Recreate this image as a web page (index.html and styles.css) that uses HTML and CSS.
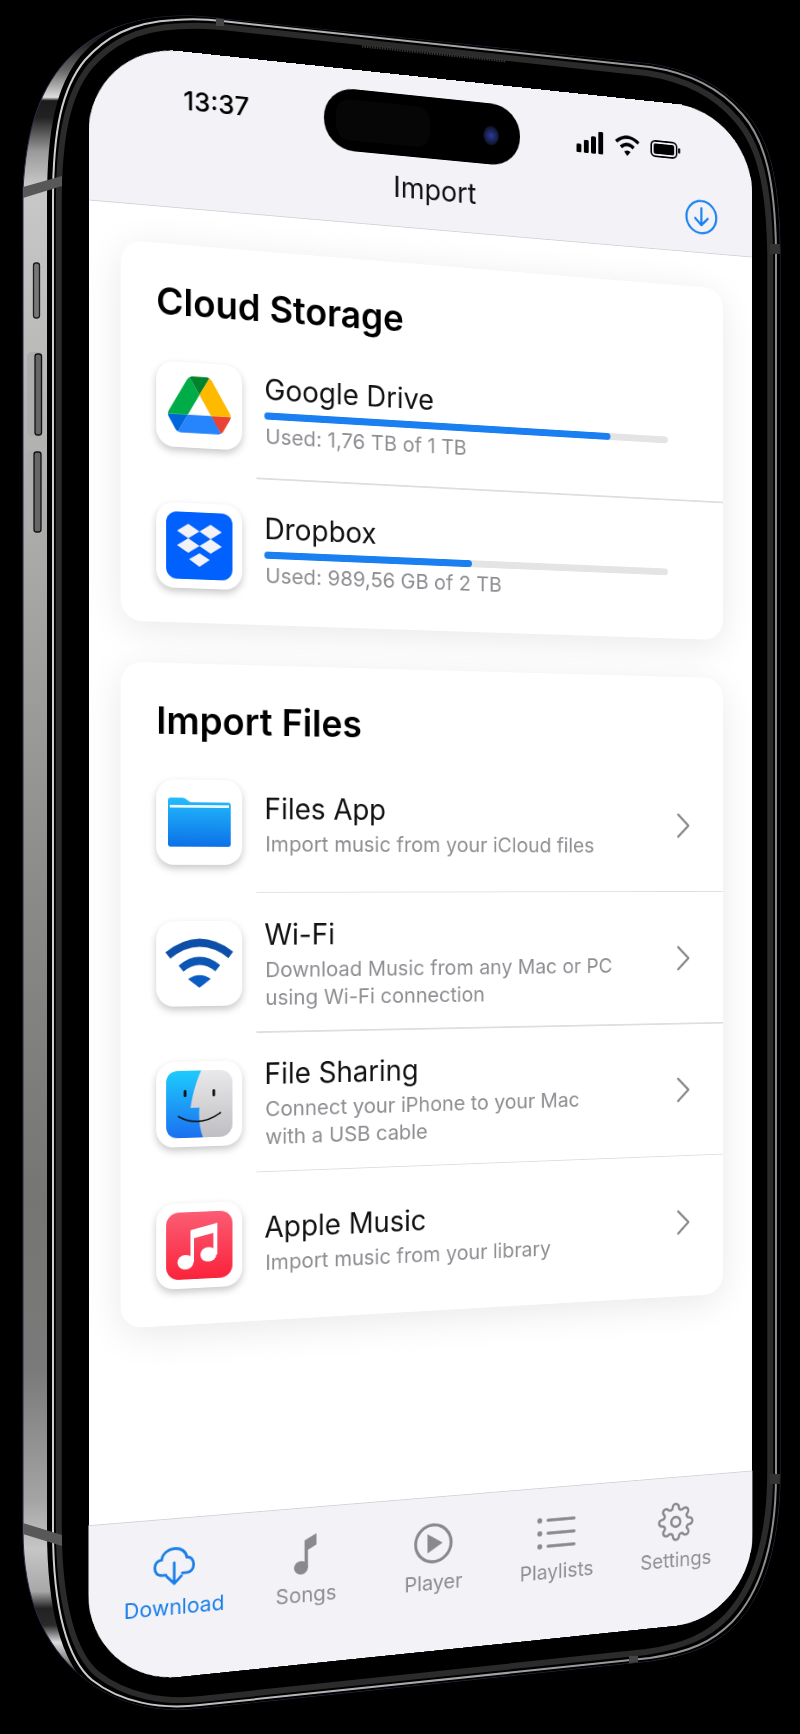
FILE: index.html
```html
<!DOCTYPE html>
<html lang="en">
<head>
  <meta charset="UTF-8" />
  <meta name="viewport" content="width=device-width, initial-scale=1.0"/>
  <title>Import</title>
  <link rel="stylesheet" href="styles.css">
</head>
<body>
  <div class="stage">
    <!-- phone body, drawn in page coordinates -->
    <svg class="body" viewBox="0 0 800 1734" width="800" height="1734">
      <defs>
        <linearGradient id="steel" gradientUnits="userSpaceOnUse" x1="0" y1="16" x2="0" y2="1710">
          <stop offset="0" stop-color="#111"/>
          <stop offset="0.016" stop-color="#222"/>
          <stop offset="0.032" stop-color="#666"/>
          <stop offset="0.048" stop-color="#ddd"/>
          <stop offset="0.05" stop-color="#1c1c1c"/>
          <stop offset="0.06" stop-color="#222"/>
          <stop offset="0.08" stop-color="#9a9a9a"/>
          <stop offset="0.1" stop-color="#c8c8c8"/>
          <stop offset="0.34" stop-color="#a6a6a4"/>
          <stop offset="0.52" stop-color="#8a8a88"/>
          <stop offset="0.7" stop-color="#757573"/>
          <stop offset="0.8" stop-color="#7a7a7a"/>
          <stop offset="0.876" stop-color="#a4a4a4"/>
          <stop offset="0.905" stop-color="#c6c6c6"/>
          <stop offset="0.93" stop-color="#a8a8a8"/>
          <stop offset="0.94" stop-color="#222"/>
          <stop offset="0.95" stop-color="#2a2a2a"/>
          <stop offset="0.96" stop-color="#ddd"/>
          <stop offset="0.98" stop-color="#333"/>
          <stop offset="1" stop-color="#111"/>
        </linearGradient>
        <linearGradient id="edge" gradientUnits="userSpaceOnUse" x1="50" y1="0" x2="780" y2="0">
          <stop offset="0" stop-color="#cfcfcf"/>
          <stop offset="0.5" stop-color="#a8a8a8"/>
          <stop offset="1" stop-color="#8c8c8c"/>
        </linearGradient>
        <path id="outer" d="M23 190 C26 130 40 85 72 55 C100 28 140 16 185 16 C195 16 210 17 222 19 L650 64 C690 70 720 85 745 112 C770 140 779 180 780 250 L780 1475 C780 1540 765 1595 735 1625 C715 1645 690 1655 650 1661 L200 1708 C150 1714 110 1700 80 1675 C45 1645 23 1600 23 1530 Z"/>
        <path id="rail" d="M53 200 C53 130 62 88 85 60 C105 38 130 22 175 20 C190 19 205 19 222 21 L650 67 C690 73 720 88 742 114 C765 140 775 180 776 250 L776 1475 C776 1540 762 1590 732 1622 C712 1642 690 1652 650 1658 L200 1705 C160 1710 120 1702 92 1680 C68 1660 53 1610 53 1530 Z"/>
        <clipPath id="outerClip"><use href="#outer"/></clipPath>
      </defs>
      <use href="#outer" fill="url(#steel)" stroke="#2b2c48" stroke-width="1"/>
      <g clip-path="url(#outerClip)">
        <use href="#rail" fill="#000" stroke="#000" stroke-width="12"/>
        <use href="#rail" fill="none" stroke="url(#edge)" stroke-width="2"/>
        <use href="#rail" fill="none" stroke="#2b2b2b" stroke-width="6" transform="translate(414.5 864) scale(0.984 0.9925) translate(-414.5 -864)"/>
        <!-- antenna bands -->
        <path d="M23 187 L62 176 L62 186 L23 198 Z" fill="#585858"/>
        <path d="M23 1523 L62 1535 L62 1546 L23 1534 Z" fill="#585858"/>
        <path d="M216 16 H224 V26 H216 Z" fill="#444"/>
        <path d="M629 1656 H638 V1668 H629 Z" fill="#444"/>
        <path d="M770 244 H782 V254 H770 Z" fill="#333"/>
        <path d="M770 1474 H782 V1484 H770 Z" fill="#333"/>
        <!-- speaker slit -->
        <path d="M362 46 L506 61" fill="none" stroke="#333" stroke-width="3" stroke-dasharray="1.5 1"/>
      </g>
      <!-- side buttons -->
      <rect x="33.500" y="263" width="6" height="55" rx="2.500" fill="#777" stroke="#1c1c1c" stroke-width="1.300"/>
      <rect x="27" y="352" width="16" height="85" rx="5" fill="#aeaeae"/>
      <rect x="35" y="354" width="6.500" height="81" rx="2.500" fill="#666" stroke="#111" stroke-width="1.300"/>
      <rect x="27" y="450" width="16" height="84" rx="5" fill="#aeaeae"/>
      <rect x="34" y="452" width="7" height="80" rx="2.500" fill="#666" stroke="#111" stroke-width="1.300"/>
    </svg>

    <main class="screen">
      <header class="top">
        <div class="status">
          <span class="time">13:37</span>
          <div class="island"><span class="sensor"></span><span class="lens"></span></div>
          <div class="status-icons">
            <svg class="signal" viewBox="0 0 34 26" width="34" height="26"><rect x="0" y="16" width="6" height="10" rx="1.5"/><rect x="9" y="11" width="6" height="15" rx="1.5"/><rect x="18" y="6" width="6" height="20" rx="1.5"/><rect x="27" y="0" width="6" height="26" rx="1.5"/></svg>
            <svg class="wifi" viewBox="0 0 32 26" width="32" height="26"><path d="M2 9 Q16 -3 30 9" fill="none" stroke="#000" stroke-width="4"/><path d="M8 15 Q16 8 24 15" fill="none" stroke="#000" stroke-width="4"/><path d="M12 20 Q16 17 20 20 L16 25 Z"/></svg>
            <svg class="battery" viewBox="0 0 38 20" width="38" height="20"><rect x="1" y="1" width="32" height="18" rx="5" fill="none" stroke="#000" stroke-width="2"/><rect x="4" y="4" width="26" height="12" rx="2.5"/><rect x="35" y="7" width="2.5" height="6" rx="1"/></svg>
          </div>
        </div>
        <div class="nav">
          <span></span>
          <h1>Import</h1>
          <svg class="nav-btn" viewBox="0 0 41 41" width="41" height="41"><circle cx="20.5" cy="20.5" r="19" fill="none" stroke="#1a82f0" stroke-width="2.6"/><path d="M20.5 10 V30 M12.5 22 L20.5 30 L28.5 22" fill="none" stroke="#1a82f0" stroke-width="2.6" stroke-linecap="round" stroke-linejoin="round"/></svg>
        </div>
      </header>

      <div class="content">
        <section class="card">
          <h2>Cloud Storage</h2>
          <div class="row">
            <div class="tile">
              <svg viewBox="0 0 87.3 78" width="70" height="63"><path d="m6.6 66.85 3.85 6.65c.8 1.4 1.95 2.5 3.3 3.3l13.75-23.8h-27.5c0 1.55.4 3.1 1.2 4.5z" fill="#0066da"/><path d="m43.65 25-13.75-23.8c-1.35.8-2.5 1.9-3.3 3.3l-25.4 44a9.06 9.06 0 0 0 -1.2 4.5h27.5z" fill="#00ac47"/><path d="m73.55 76.8c1.35-.8 2.5-1.9 3.3-3.3l1.6-2.75 7.65-13.25c.8-1.4 1.2-2.95 1.2-4.5h-27.502l5.852 11.5z" fill="#ea4335"/><path d="m43.65 25 13.75-23.8c-1.35-.8-2.9-1.2-4.5-1.2h-18.5c-1.6 0-3.15.45-4.5 1.2z" fill="#00832d"/><path d="m59.8 53h-32.3l-13.75 23.8c1.35.8 2.9 1.2 4.5 1.2h50.8c1.6 0 3.15-.45 4.5-1.2z" fill="#2684fc"/><path d="m73.4 26.5-12.7-22c-.8-1.4-1.95-2.5-3.3-3.3l-13.75 23.8 16.15 28h27.45c0-1.55-.4-3.1-1.2-4.5z" fill="#ffba00"/></svg>
            </div>
            <div class="storage">
              <div class="name">Google Drive</div>
              <div class="bar"><div class="fill fill-drive"></div></div>
              <div class="sub">Used: 1,76 TB of 1 TB</div>
            </div>
          </div>
          <hr />
          <div class="row">
            <div class="tile">
              <svg viewBox="0 0 74 74" width="74" height="74"><rect width="74" height="74" rx="12" fill="#0061fe"/><path d="M24.500 13 L37 21 L24.500 29 L12 21 Z M49.500 13 L62 21 L49.500 29 L37 21 Z M24.500 29 L37 37 L24.500 45 L12 37 Z M49.500 29 L62 37 L49.500 45 L37 37 Z M37 45 L48.500 52 L37 60 L25.500 52 Z" fill="#f2f2f7"/></svg>
            </div>
            <div class="storage">
              <div class="name">Dropbox</div>
              <div class="bar"><div class="fill fill-dropbox"></div></div>
              <div class="sub">Used: 989,56 GB of 2 TB</div>
            </div>
          </div>
        </section>

        <section class="card card-files">
          <h2>Import Files</h2>
          <div class="row">
            <div class="tile">
              <svg viewBox="0 0 70 54" width="70" height="54"><defs><linearGradient id="folder" x1="0" y1="0" x2="0" y2="1"><stop offset="0" stop-color="#22bcfb"/><stop offset="1" stop-color="#0c70e8"/></linearGradient></defs><path d="M0 3 Q0 0 3 0 H16 Q19 0 22 3 L25 5 H67 Q70 5 70 8 V51 Q70 54 67 54 H3 Q0 54 0 51 Z" fill="url(#folder)"/><rect x="2" y="8" width="66" height="3" fill="#e8f6ff"/></svg>
            </div>
            <div class="info">
              <div class="name">Files App</div>
              <div class="sub">Import music from your iCloud files</div>
            </div>
            <svg class="chev" viewBox="0 0 19 30" width="19" height="30"><path d="M3 2 L16 15 L3 28" fill="none" stroke="#8a8a8e" stroke-width="2.6" stroke-linecap="round" stroke-linejoin="round"/></svg>
          </div>
          <hr />
          <div class="row">
            <div class="tile">
              <svg viewBox="0 0 78 56" width="76" height="55"><path d="M3 19 Q39 -9 75 19" fill="none" stroke="#0d4fa8" stroke-width="9"/><path d="M18 34 Q39 17 60 34" fill="none" stroke="#0b55b4" stroke-width="9"/><path d="M26 46 Q39 37 52 46 L39 56 Z" fill="#0a5cc4"/></svg>
            </div>
            <div class="info">
              <div class="name">Wi-Fi</div>
              <div class="sub">Download Music from any Mac or PC<br />using Wi-Fi connection</div>
            </div>
            <svg class="chev" viewBox="0 0 19 30" width="19" height="30"><path d="M3 2 L16 15 L3 28" fill="none" stroke="#8a8a8e" stroke-width="2.6" stroke-linecap="round" stroke-linejoin="round"/></svg>
          </div>
          <hr />
          <div class="row">
            <div class="tile">
              <svg viewBox="0 0 74 74" width="74" height="74"><defs><linearGradient id="fBlue" x1="0" y1="0" x2="0" y2="1"><stop offset="0" stop-color="#1ecbfd"/><stop offset="1" stop-color="#1b6ff0"/></linearGradient><linearGradient id="fGray" x1="0" y1="0" x2="0" y2="1"><stop offset="0" stop-color="#e9e9eb"/><stop offset="1" stop-color="#bfbfc3"/></linearGradient></defs><rect width="74" height="74" rx="14" fill="url(#fGray)"/><path d="M39 0 C33 12 29 28 27 41 H37 C36 52 37 64 41 74 H14 Q0 74 0 60 V14 Q0 0 14 0 Z" fill="url(#fBlue)"/><rect x="19.500" y="21" width="3" height="8" rx="1.500" fill="#111"/><rect x="51.500" y="21" width="3" height="8" rx="1.500" fill="#111"/><path d="M13 50 Q37 64 61 47" fill="none" stroke="#111" stroke-width="1.600"/></svg>
            </div>
            <div class="info">
              <div class="name">File Sharing</div>
              <div class="sub">Connect your iPhone to your Mac<br />with a USB cable</div>
            </div>
            <svg class="chev" viewBox="0 0 19 30" width="19" height="30"><path d="M3 2 L16 15 L3 28" fill="none" stroke="#8a8a8e" stroke-width="2.6" stroke-linecap="round" stroke-linejoin="round"/></svg>
          </div>
          <hr />
          <div class="row">
            <div class="tile">
              <svg viewBox="0 0 74 74" width="74" height="74"><defs><linearGradient id="music" x1="0" y1="0" x2="0" y2="1"><stop offset="0" stop-color="#fb5c74"/><stop offset="1" stop-color="#fa233b"/></linearGradient></defs><rect width="74" height="74" rx="14" fill="url(#music)"/><path d="M27 20 L57 13 V48 H52.500 V24 L31 29 V55 H27 Z" fill="#fff"/><ellipse cx="21.500" cy="55" rx="9" ry="8" fill="#fff"/><ellipse cx="47" cy="47.500" rx="9" ry="8" fill="#fff"/></svg>
            </div>
            <div class="info">
              <div class="name">Apple Music</div>
              <div class="sub">Import music from your library</div>
            </div>
            <svg class="chev" viewBox="0 0 19 30" width="19" height="30"><path d="M3 2 L16 15 L3 28" fill="none" stroke="#8a8a8e" stroke-width="2.6" stroke-linecap="round" stroke-linejoin="round"/></svg>
          </div>
        </section>
      </div>

      <nav class="tabs">
        <div class="tab active">
          <svg viewBox="0 0 46 42" width="46" height="42"><path d="M14 30 H10 C4 30 1.500 26 1.500 21 C1.500 16 5 13 9 13 C10 6 16 1.500 24 1.500 C31 1.500 36 6 37 12 C42 12 44.500 16 44.500 21 C44.500 26 41 29 37 29 H32" fill="none" stroke="#1a7fe8" stroke-width="3" stroke-linecap="round"/><path d="M23 17 V40 M15 32 L23 40 L31 32" fill="none" stroke="#1a7fe8" stroke-width="3" stroke-linecap="round" stroke-linejoin="round"/></svg>
          <span>Download</span>
        </div>
        <div class="tab">
          <svg viewBox="0 0 34 52" width="34" height="52"><ellipse cx="10" cy="42" rx="9" ry="8.500" fill="#8a8a8e"/><path d="M14.500 8 L30 0 V14 L19 20 V42 H14.500 Z" fill="#8a8a8e"/></svg>
          <span>Songs</span>
        </div>
        <div class="tab">
          <svg viewBox="0 0 46 46" width="46" height="46"><circle cx="23" cy="23" r="21" fill="none" stroke="#8a8a8e" stroke-width="3.500"/><path d="M16 12 L34 23 L16 34 Z" fill="#8a8a8e"/></svg>
          <span>Player</span>
        </div>
        <div class="tab">
          <svg viewBox="0 0 47 38" width="47" height="38"><circle cx="3" cy="4" r="3" fill="#8a8a8e"/><circle cx="3" cy="19" r="3" fill="#8a8a8e"/><circle cx="3" cy="34" r="3" fill="#8a8a8e"/><path d="M13 4 H45 M13 19 H45 M13 34 H45" fill="none" stroke="#8a8a8e" stroke-width="3.600" stroke-linecap="round"/></svg>
          <span>Playlists</span>
        </div>
        <div class="tab">
          <svg viewBox="0 0 24 24" width="46" height="46"><circle cx="12" cy="12" r="3" fill="none" stroke="#8a8a8e" stroke-width="1.500"/><path d="M19.4 15a1.65 1.65 0 0 0 .33 1.82l.06.06a2 2 0 0 1 0 2.83 2 2 0 0 1-2.83 0l-.06-.06a1.65 1.65 0 0 0-1.82-.33 1.65 1.65 0 0 0-1 1.51V21a2 2 0 0 1-2 2 2 2 0 0 1-2-2v-.09A1.65 1.65 0 0 0 9 19.4a1.65 1.65 0 0 0-1.82.33l-.06.06a2 2 0 0 1-2.83 0 2 2 0 0 1 0-2.83l.06-.06a1.65 1.65 0 0 0 .33-1.82 1.65 1.65 0 0 0-1.51-1H3a2 2 0 0 1-2-2 2 2 0 0 1 2-2h.09A1.65 1.65 0 0 0 4.6 9a1.65 1.65 0 0 0-.33-1.82l-.06-.06a2 2 0 0 1 0-2.83 2 2 0 0 1 2.83 0l.06.06a1.65 1.65 0 0 0 1.82.33H9a1.65 1.65 0 0 0 1-1.51V3a2 2 0 0 1 2-2 2 2 0 0 1 2 2v.09a1.65 1.65 0 0 0 1 1.51 1.65 1.65 0 0 0 1.82-.33l.06-.06a2 2 0 0 1 2.83 0 2 2 0 0 1 0 2.83l-.06.06a1.65 1.65 0 0 0-.33 1.82V9a1.65 1.65 0 0 0 1.51 1H21a2 2 0 0 1 2 2 2 2 0 0 1-2 2h-.09a1.65 1.65 0 0 0-1.51 1z" fill="none" stroke="#8a8a8e" stroke-width="1.500"/></svg>
          <span>Settings</span>
        </div>
      </nav>
    </main>
  </div>
</body>
</html>
```

FILE: styles.css
```css
body {
  margin: 0;
  background-color: #000;
  font-family: Inter, "Liberation Sans", sans-serif;
}

.stage {
  position: relative;
  width: 800px;
  height: 1734px;
  overflow: hidden;
}

.body {
  position: absolute;
  left: 0;
  top: 0;
}

/* the screen is laid out flat, then tilted into the phone */
.screen {
  position: absolute;
  left: 0;
  top: 0;
  width: 786px;
  height: 1790px;
  display: flex;
  flex-direction: column;
  background-color: #fff;
  border-radius: 100px;
  overflow: hidden;
  transform-origin: 0 0;
  transform: matrix3d(0.9329, 0.10282, 0, 0.00011728, 0, 0.91872, 0, 0, 0, 0, 1, 0, 88.5, 41.5, 0, 1);
}

.top {
  height: 173px;
  flex: none;
  box-sizing: border-box;
  background-color: #f2f2f7;
  border-bottom: 1.5px solid #d4d4d8;
}

.status {
  display: flex;
  align-items: flex-start;
  height: 74px;
  padding: 22px 0 0 104px;
}

.time {
  width: 159px;
  margin-top: 15px;
  font-size: 29px;
  line-height: 34px;
  font-weight: 500;
  color: #000;
}

.island {
  position: relative;
  width: 232px;
  height: 70px;
  border-radius: 35px;
  background-color: #000;
}

.sensor {
  position: absolute;
  left: 14px;
  top: 12px;
  width: 110px;
  height: 46px;
  border-radius: 16px;
  background-color: #060607;
}

.lens {
  position: absolute;
  right: 26px;
  top: 26px;
  width: 18px;
  height: 22px;
  border-radius: 50%;
  background: radial-gradient(circle, #2c3a9a 0%, #141a3c 60%, #05060f 100%);
}

.status-icons {
  display: flex;
  align-items: center;
  gap: 13px;
  height: 26px;
  margin: 20px 0 0 69px;
}

.nav {
  display: grid;
  grid-template-columns: 1fr auto 1fr;
  align-items: center;
  height: 68px;
  padding: 0 45px;
}

.nav h1 {
  margin: 0 0 6px;
  font-size: 32px;
  font-weight: 400;
  color: #111;
}

.nav-btn {
  justify-self: end;
}

.content {
  flex: 1;
  padding: 40px 38px 0 35px;
}

.card {
  padding: 0 0 7px 39px;
  margin-bottom: 45px;
  background-color: #fff;
  border-radius: 24px;
  box-shadow: 0 8px 44px rgba(0, 0, 0, 0.09);
}

.card-files {
  padding-bottom: 10px;
}

.card h2 {
  margin: 0;
  padding: 38px 0 10px;
  font-size: 41px;
  line-height: 50px;
  font-weight: 600;
  color: #000;
}

.row {
  display: flex;
  align-items: center;
  height: 155px;
}

.card hr {
  height: 1.5px;
  margin: -1px 0 0 112px;
  border: none;
  background-color: #dedee2;
}

.tile {
  flex: none;
  display: flex;
  align-items: center;
  justify-content: center;
  width: 96px;
  height: 94px;
  margin-right: 25px;
  background-color: #fff;
  border-radius: 20px;
  box-shadow: 0 4px 9px rgba(0, 0, 0, 0.22);
}

.storage {
  width: 483px;
}

.info {
  flex: 1;
}

.name {
  font-size: 32px;
  line-height: 46px;
  color: #111;
}

.sub {
  margin-left: 1px;
  font-size: 23.5px;
  line-height: 31px;
  color: #8e8e93;
}

.bar {
  height: 8px;
  margin-top: 2px;
  margin-bottom: 3px;
  background-color: #e4e4e6;
  border-radius: 4px;
}

.fill {
  height: 100%;
  background-color: #1a7ff0;
  border-radius: 4px;
}

.fill-drive {
  width: 85%;
}

.fill-dropbox {
  width: 50%;
}

.chev {
  flex: none;
  margin-right: 41px;
}

.tabs {
  flex: none;
  display: grid;
  grid-template-columns: repeat(5, 148.5px);
  height: 175px;
  box-sizing: border-box;
  padding: 29px 0 0 20px;
  background-color: #f2f2f7;
  border-top: 1.5px solid #d4d4d8;
}

.tab {
  display: flex;
  flex-direction: column;
  align-items: center;
  font-size: 23.5px;
  line-height: 28px;
  color: #8e8e93;
}

.tab svg {
  height: 46px;
  margin-bottom: 8px;
}

.tab.active {
  color: #1a7fe8;
}
```
